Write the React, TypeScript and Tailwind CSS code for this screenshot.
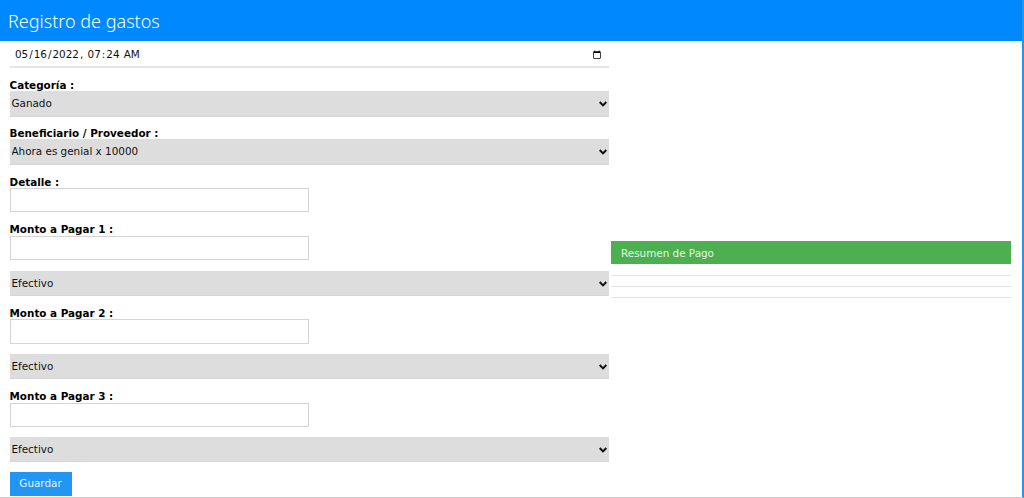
import React from "react";

const dv = "font-['DejaVu_Sans',sans-serif]";

function Label({ children, className = "" }: { children: React.ReactNode; className?: string }) {
  return <label className={`block h-[12px] text-[10.4px] leading-[12px] font-bold text-black ${className}`}>{children}</label>;
}

function Select({ value, className = "", h = "h-[26px]" }: { value: string; className?: string; h?: string }) {
  return (
    <div className={`relative ${h} ${className}`}>
      <select
        defaultValue={value}
        className="block w-full h-full pl-[2px] pt-[1px] bg-[#dddddd] border-b border-[#d6d6d6] text-[10.4px] text-[#111111] outline-none appearance-none"
      >
        <option>{value}</option>
      </select>
      <svg
        viewBox="0 0 8 6"
        className="absolute right-[2px] top-1/2 -translate-y-1/2 w-[8px] h-[6px] pointer-events-none"
      >
        <path d="M0.7 1 L4 4.4 L7.3 1" fill="none" stroke="#111111" strokeWidth="2" />
      </svg>
    </div>
  );
}

function TextBox({ className = "", h = "h-[24px]" }: { className?: string; h?: string }) {
  return <input type="text" className={`block w-[299.5px] ${h} bg-white border border-[#d4d4d4] ${className}`} />;
}

export default function App() {
  return (
    <div className={`h-[498px] w-[1024px] overflow-hidden bg-white border-r-2 border-b border-r-[#2196f3] border-b-[#cccccc] ${dv}`}>
      <header className="h-[41px] bg-[#0088ff] pl-2 flex items-center">
        <h1 className="text-[18px] leading-none text-white font-light font-['Noto_Sans',sans-serif]">Registro de gastos</h1>
      </header>
      <div className="flex pl-[9.5px] gap-[2px]">
        <form className="w-[599.5px] shrink-0">
          <input
            type="datetime-local"
            defaultValue="2022-05-16T07:24"
            className="block w-full h-[27px] pl-[4.5px] pr-[5px] pt-[3px] border-b-2 border-[#e5e5e5] text-[10.4px] text-[#111111] bg-white outline-none"
          />
          <Label className="mt-[11px]">Categoría :</Label>
          <Select value="Ganado" />
          <Label className="mt-[10px]">Beneficiario / Proveedor :</Label>
          <Select value="Ahora es genial x 10000" />
          <Label className="mt-[11px]">Detalle :</Label>
          <TextBox />
          <Label className="mt-[11px]">Monto a Pagar 1 :</Label>
          <TextBox className="mt-[1px]" />
          <Select value="Efectivo" h="h-[25px]" className="mt-[11px]" />
          <Label className="mt-[11px]">Monto a Pagar 2 :</Label>
          <TextBox h="h-[25px]" />
          <Select value="Efectivo" h="h-[25px]" className="mt-[10px]" />
          <Label className="mt-[11px]">Monto a Pagar 3 :</Label>
          <TextBox className="mt-[1px]" />
          <Select value="Efectivo" h="h-[25px]" className="mt-[10px]" />
          <button type="button" className="mt-[10px] block w-[62px] h-[24px] bg-[#2196f3] text-[10.4px] text-[#e8f4fe]">
            Guardar
          </button>
        </form>
        <aside className="w-[400px] pt-[200px]">
          <div className="h-[23px] bg-[#4caf50] pl-[10px] pt-[2px] flex items-center text-[10.4px] text-[#e6f5e7]">Resumen de Pago</div>
          <div className="mt-[11px] h-[1px] bg-[#e5e5e5]" />
          <div className="mt-[10px] h-[1px] bg-[#e5e5e5]" />
          <div className="mt-[10px] h-[1px] bg-[#e5e5e5]" />
        </aside>
      </div>
    </div>
  );
}
